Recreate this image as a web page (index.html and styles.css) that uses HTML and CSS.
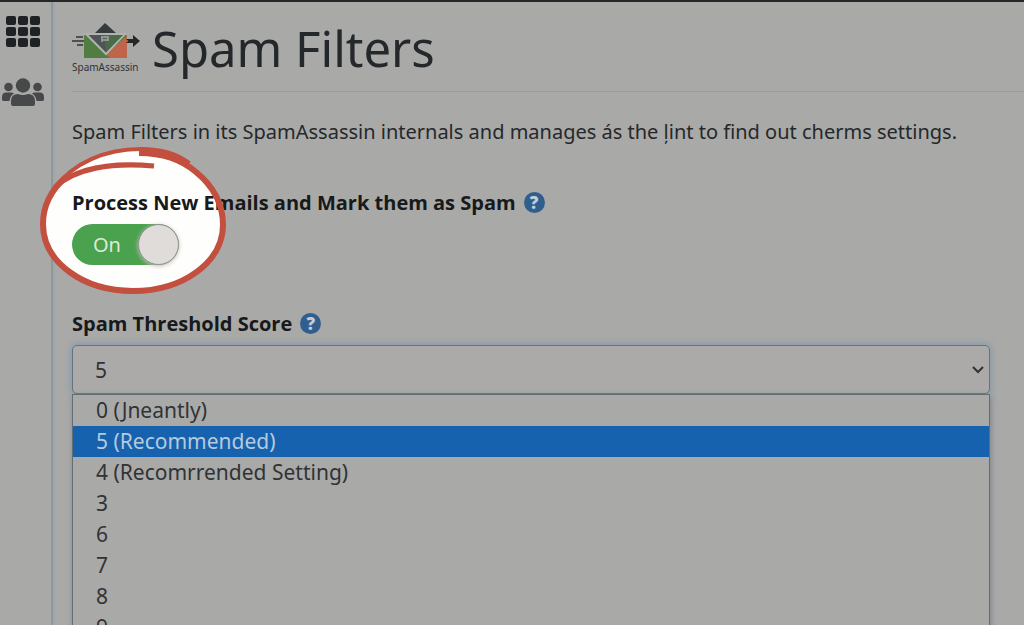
FILE: index.html
```html
<!DOCTYPE html>
<html lang="en">
<head>
<meta charset="utf-8">
<title>Spam Filters</title>
<link rel="stylesheet" href="styles.css">
</head>
<body>

<div class="page">
  <nav class="sidebar">
    <a class="sidebar-link" href="#" aria-label="Tools">
      <svg width="36" height="32" viewBox="0 0 36 32">
        <g fill="#1f2224">
          <rect x="1" y="0" width="10" height="9" rx="2"/><rect x="13" y="0" width="10" height="9" rx="2"/><rect x="25" y="0" width="10" height="9" rx="2"/>
          <rect x="1" y="11" width="10" height="9" rx="2"/><rect x="13" y="11" width="10" height="9" rx="2"/><rect x="25" y="11" width="10" height="9" rx="2"/>
          <rect x="1" y="22" width="10" height="9" rx="2"/><rect x="13" y="22" width="10" height="9" rx="2"/><rect x="25" y="22" width="10" height="9" rx="2"/>
        </g>
      </svg>
    </a>
    <a class="sidebar-link" href="#" aria-label="User Manager">
      <svg width="42" height="29" viewBox="0 0 42 29">
        <g fill="#46484a">
          <circle cx="21" cy="7.5" r="7.2"/>
          <circle cx="6.5" cy="9" r="4.3"/>
          <circle cx="35.5" cy="9" r="4.3"/>
          <path d="M9 26v-3q0-7 7-7 5 2 10 0 7 0 7 7v3q0 2-2 2H11q-2 0-2-2z"/>
          <path d="M0 21.500v-2q0-5 4-5h5q2 0 3 1-4 2-4.500 7.500H2q-2 0-2-1.500z"/>
          <path d="M42 21.500v-2q0-5-4-5h-5q-2 0-3 1 4 2 4.500 7.500H40q2 0 2-1.500z"/>
        </g>
      </svg>
    </a>
  </nav>

  <main class="content">
    <header class="page-header">
      <div class="logo">
        <svg width="68" height="38" viewBox="0 0 68 38">
          <path d="M23 11 33 1l11 10z" fill="#383b3e"/>
          <rect x="12" y="13" width="43" height="23" rx="1" fill="#527d42"/>
          <path d="M34 32 55 14v20q0 2-2 2H38z" fill="#c0654a"/>
          <path d="M14 12h39L34 32z" fill="#50545a" stroke="#b0b3ae" stroke-width="2"/>
          <path d="M32 13h19L34 30z" fill="#4b6b48"/>
          <path d="M30 20v-5h6v3h-5" fill="none" stroke="#8f958f" stroke-width="2"/>
          <path d="M0 19h12M4 15h7M5 23h6" stroke="#303335" stroke-width="1.500"/>
          <path d="M54 17h7v-4l7 6-7 6v-4h-7l2-2z" fill="#252729"/>
        </svg>
        <span class="logo-text">SpamAssassin</span>
      </div>
      <h1 class="title">Spam Filters</h1>
    </header>

    <p class="intro">Spam Filters in its SpamAssassin internals and manages ás the ļint to find out cherms settings.</p>

    <section class="process">
      <svg class="spotlight" width="190" height="150" viewBox="0 0 190 150">
        <path d="M5 77C5 42 42 4 98 4c52-1 85 37 85 74 0 35-38 65-89 65S5 113 5 77z" fill="#fefefd"/>
      </svg>
      <div class="label-row">
        <label class="label" for="process">Process New Emails and Mark them as Spam</label>
        <button class="help" type="button" aria-label="Help">?</button>
      </div>
      <span class="switch">
        <input class="switch-input" type="checkbox" id="process" checked>
        <span class="switch-text">On</span>
        <span class="switch-knob"></span>
      </span>
      <svg class="spotlight spotlight-ring" width="190" height="150" viewBox="0 0 190 150">
        <g fill="none" stroke="#c34f3f" stroke-linejoin="round">
          <path d="M100 6c24 0 43 7 57 19 17 14 27 32 27 53 0 37-40 66-90 66S4 115 4 77c0-18 8-34 23-47" stroke-width="6"/>
          <path d="M16 40c20-18 55-25 99-21" stroke-width="5"/>
          <path d="M16 41C34 16 66 2 102 2c19 0 35 4 48 14" stroke-width="4"/>
          <path d="M100 4c20-1 36 4 50 13" stroke-width="6"/>
        </g>
      </svg>
    </section>

    <section class="threshold">
      <div class="label-row">
        <label class="label" for="score">Spam Threshold Score</label>
        <button class="help" type="button" aria-label="Help">?</button>
      </div>
      <div class="select-box">
        <select class="select" id="score">
          <option>5</option>
        </select>
        <svg class="select-arrow" width="12" height="8" viewBox="0 0 12 8">
          <path d="M1 1l5 5 5-5" fill="none" stroke="#303234" stroke-width="2"/>
        </svg>
      </div>
      <ul class="options" role="listbox" aria-label="Spam Threshold Score">
        <li class="option" role="option">0 (Jneantly)</li>
        <li class="option selected" role="option" aria-selected="true">5 (Recommended)</li>
        <li class="option" role="option">4 (Recomrrended Setting)</li>
        <li class="option" role="option">3</li>
        <li class="option" role="option">6</li>
        <li class="option" role="option">7</li>
        <li class="option" role="option">8</li>
        <li class="option" role="option">9</li>
      </ul>
    </section>
  </main>
</div>

</body>
</html>
```
FILE: styles.css
```css
* {
  box-sizing: border-box;
}

body {
  margin: 0;
  background-color: #a9a9a8;
  color: #25282a;
  font-family: "Noto Sans", "Open Sans", sans-serif;
  font-size: 20px;
}

.page {
  display: flex;
  height: 100vh;
  overflow: hidden;
  border-top: 2px solid #25282b;
}

.sidebar {
  flex: 0 0 53px;
  display: flex;
  flex-direction: column;
  align-items: center;
  gap: 30px;
  padding: 14px 5px 0 0;
  border-right: 2px solid #8d989e;
  box-shadow: 0 0 4px #94a0a6;
}

.sidebar-link {
  display: flex;
}

.content {
  flex: 1;
  min-width: 0;
  padding: 0 34px 0 19px;
}

.page-header {
  display: flex;
  align-items: center;
  gap: 12px;
  height: 90px;
  padding-top: 2px;
  margin-right: -34px;
  border-bottom: 1px solid #9c9d9d;
}

.logo {
  display: flex;
  flex-direction: column;
  width: 68px;
}

.logo-text {
  font-size: 10px;
  line-height: 14px;
  color: #303335;
}

.title {
  margin: 0;
  font-size: 49px;
  line-height: 60px;
  font-weight: 400;
}

.intro {
  margin: 26px 0 42px;
  line-height: 28px;
  white-space: nowrap;
}

.process {
  position: relative;
  margin-bottom: 44px;
}

.spotlight {
  position: absolute;
  top: -41px;
  left: -33px;
  overflow: visible;
  pointer-events: none;
}

.spotlight-ring {
  z-index: 2;
}

.label-row {
  position: relative;
  display: flex;
  align-items: center;
  gap: 8px;
  height: 28px;
}

.label {
  font-family: "Open Sans", sans-serif;
  font-weight: 700;
  color: #17191a;
}

.help {
  width: 21px;
  height: 21px;
  padding: 0;
  border: 0;
  border-radius: 50%;
  background-color: #305f8f;
  color: #c3ccd4;
  font: 800 17px/21px "Open Sans", sans-serif;
}

.switch {
  position: relative;
  display: flex;
  align-items: center;
  width: 107px;
  height: 41px;
  margin-top: 8px;
  border-radius: 21px;
  background-color: #4aa24f;
}

.switch-input {
  position: absolute;
  inset: 0;
  width: 100%;
  height: 100%;
  margin: 0;
  opacity: 0;
}

.switch-text {
  flex: 1;
  padding-left: 21px;
  color: #dcebd9;
}

.switch-knob {
  width: 41px;
  height: 41px;
  border: 1px solid #8b918f;
  border-radius: 50%;
  background-color: #e0dcda;
  box-shadow: 0 1px 4px #cbbdb5;
}

.select-box {
  position: relative;
  margin-top: 8px;
}

.select {
  display: block;
  width: 100%;
  height: 49px;
  padding: 0 22px;
  border: 1px solid #65737d;
  border-radius: 5px;
  background-color: #abaaa8;
  box-shadow: 0 0 7px 1px #8299aa;
  color: #303335;
  font: inherit;
  font-size: 21px;
  appearance: none;
}

.select-arrow {
  position: absolute;
  top: 21px;
  right: 6px;
}

.options {
  position: relative;
  margin: 0;
  padding: 0;
  border: 1px solid #626e76;
  background-color: #a9a9a8;
  box-shadow: 1px 2px 6px #7f8487;
  list-style: none;
}

.option {
  height: 31px;
  padding-left: 23px;
  font-size: 21px;
  line-height: 31px;
  color: #303335;
}

.option.selected {
  background-color: #1762ae;
  color: #b5cbdc;
}
```
